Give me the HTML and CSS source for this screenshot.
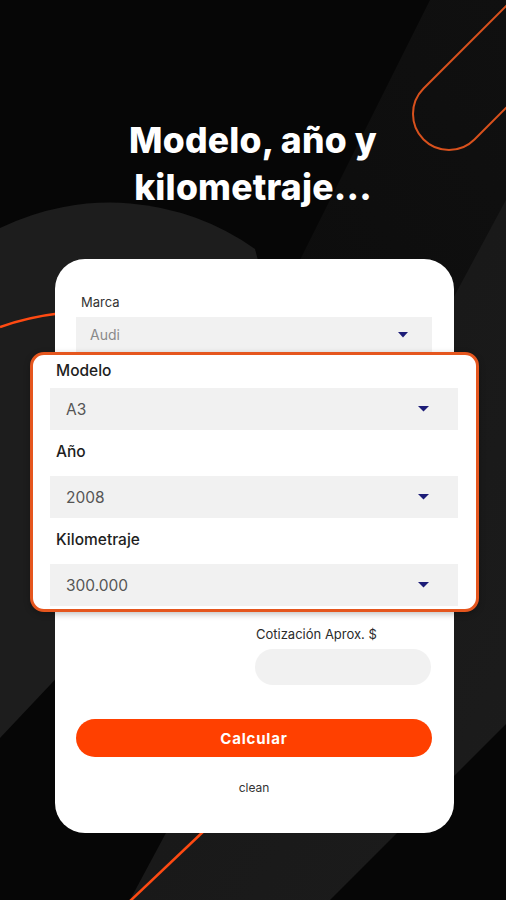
FILE: index.html
```html
<!DOCTYPE html>
<html lang="es">
<head>
<meta charset="utf-8">
<title>Modelo, año y kilometraje</title>
<link rel="stylesheet" href="styles.css">
</head>
<body>
<div class="screen">
  <svg class="bg" width="506" height="900" viewBox="0 0 506 900" aria-hidden="true">
    <defs>
      <linearGradient id="band" x1="0" y1="0" x2="1" y2="1">
        <stop offset="0" stop-color="#161616"/>
        <stop offset="1" stop-color="#1c1c1c"/>
      </linearGradient>
      <linearGradient id="stripe" x1="1" y1="0" x2="0" y2="1">
        <stop offset="0" stop-color="#101010"/>
        <stop offset="1" stop-color="#0b0b0b"/>
      </linearGradient>
    </defs>
    <rect width="506" height="900" fill="#060606"/>
    <polygon points="430,0 506,0 506,520 170,520" fill="url(#stripe)"/>
    <polygon points="506,200 506,724 330,900 130,900" fill="url(#band)"/>
    <path d="M0,228 A250 250 0 0 1 255,249 L300,420 L0,738 Z" fill="#1d1d1d"/>
    <rect x="-36" y="-320" width="72" height="356" rx="36" transform="translate(449,114) rotate(45)" fill="none" stroke="#d8511d" stroke-width="2"/>
    <path d="M0,327 Q28,317 62,313" fill="none" stroke="#ff4a12" stroke-width="2.5"/>
    <path d="M206,829 L128,903" fill="none" stroke="#ff4a12" stroke-width="2.5"/>
  </svg>

  <h1 class="title">Modelo, año y<br>kilometraje...</h1>

  <div class="card">
    <div class="field-label small">Marca</div>
    <div class="select small-select">
      <span class="select-value muted">Audi</span>
      <svg class="caret" width="10" height="6" viewBox="0 0 10 6"><path d="M0,0 H10 L5,5.5 Z" fill="#1d1d78"/></svg>
    </div>

    <div class="callout">
      <div class="field-label big first">Modelo</div>
      <div class="select big-select">
        <span class="select-value">A3</span>
        <svg class="caret" width="11" height="6" viewBox="0 0 11 6"><path d="M0,0 H11 L5.5,5.5 Z" fill="#1d1d78"/></svg>
      </div>
      <div class="field-label big">Año</div>
      <div class="select big-select">
        <span class="select-value">2008</span>
        <svg class="caret" width="11" height="6" viewBox="0 0 11 6"><path d="M0,0 H11 L5.5,5.5 Z" fill="#1d1d78"/></svg>
      </div>
      <div class="field-label big">Kilometraje</div>
      <div class="select big-select">
        <span class="select-value">300.000</span>
        <svg class="caret" width="11" height="6" viewBox="0 0 11 6"><path d="M0,0 H11 L5.5,5.5 Z" fill="#1d1d78"/></svg>
      </div>
    </div>

    <div class="quote">
      <div class="quote-label">Cotización Aprox. $</div>
      <div class="quote-box"></div>
    </div>

    <button class="calc">Calcular</button>
    <div class="clean">clean</div>
  </div>
</div>
</body>
</html>
```

FILE: styles.css
```css
* { box-sizing: border-box; }
html, body { margin: 0; padding: 0; background: #060606; }
body { font-family: Inter, "Noto Sans", sans-serif; }

.screen {
  position: relative;
  width: 506px;
  height: 900px;
  overflow: hidden;
}

.bg {
  position: absolute;
  left: 0;
  top: 0;
}

.title {
  position: relative;
  margin: 0;
  padding-top: 117px;
  text-align: center;
  color: #ffffff;
  font-family: Inter, sans-serif;
  font-weight: 800;
  font-size: 35.5px;
  line-height: 47px;
  letter-spacing: 0.2px;
}

.card {
  position: relative;
  margin: 48px 0 0 55px;
  width: 399px;
  background: #ffffff;
  border-radius: 30px;
  padding: 35px 22px 37px 21px;
}

.field-label.small {
  font-size: 13px;
  line-height: 16px;
  color: #333;
  padding-left: 5px;
  margin-bottom: 7px;
}

.select {
  display: flex;
  align-items: center;
  justify-content: space-between;
  background: #f1f1f1;
}

.small-select {
  height: 35px;
  padding: 0 24px 0 14px;
}

.small-select .select-value { font-size: 14px; }

.muted { color: #8a8a8a; }

.callout {
  margin: 0 -47px 0 -46px;
  background: #ffffff;
  border: 3px solid #e5561e;
  border-radius: 14px;
  padding: 4px 18px 3px 17px;
  box-shadow: 0 2px 6px rgba(0,0,0,0.25);
}

.field-label.big {
  font-size: 15.5px;
  line-height: 20px;
  font-weight: 500;
  color: #1e1e1e;
  padding-left: 6px;
  margin: 12px 0 14px;
}

.field-label.big.first {
  margin: 2px 0 7px;
}

.big-select {
  height: 42px;
  padding: 0 29px 0 16px;
}

.big-select .select-value {
  font-size: 15.5px;
  color: #555555;
}

.caret { display: block; }

.quote {
  margin: 14px 1px 0 auto;
  width: 176px;
}

.quote-label {
  font-size: 13px;
  line-height: 16px;
  color: #2b2b2b;
  padding-left: 1px;
}

.quote-box {
  margin-top: 7px;
  height: 36px;
  border-radius: 18px;
  background: #f1f1f1;
}

.calc {
  display: block;
  width: 100%;
  margin-top: 34px;
  height: 38px;
  border: none;
  border-radius: 19px;
  background: #ff4000;
  color: #ffffff;
  font-family: Inter, sans-serif;
  font-weight: 700;
  font-size: 15px;
  letter-spacing: 0.8px;
}

.clean {
  margin-top: 23px;
  text-align: center;
  font-size: 12px;
  line-height: 16px;
  color: #333;
}
```
